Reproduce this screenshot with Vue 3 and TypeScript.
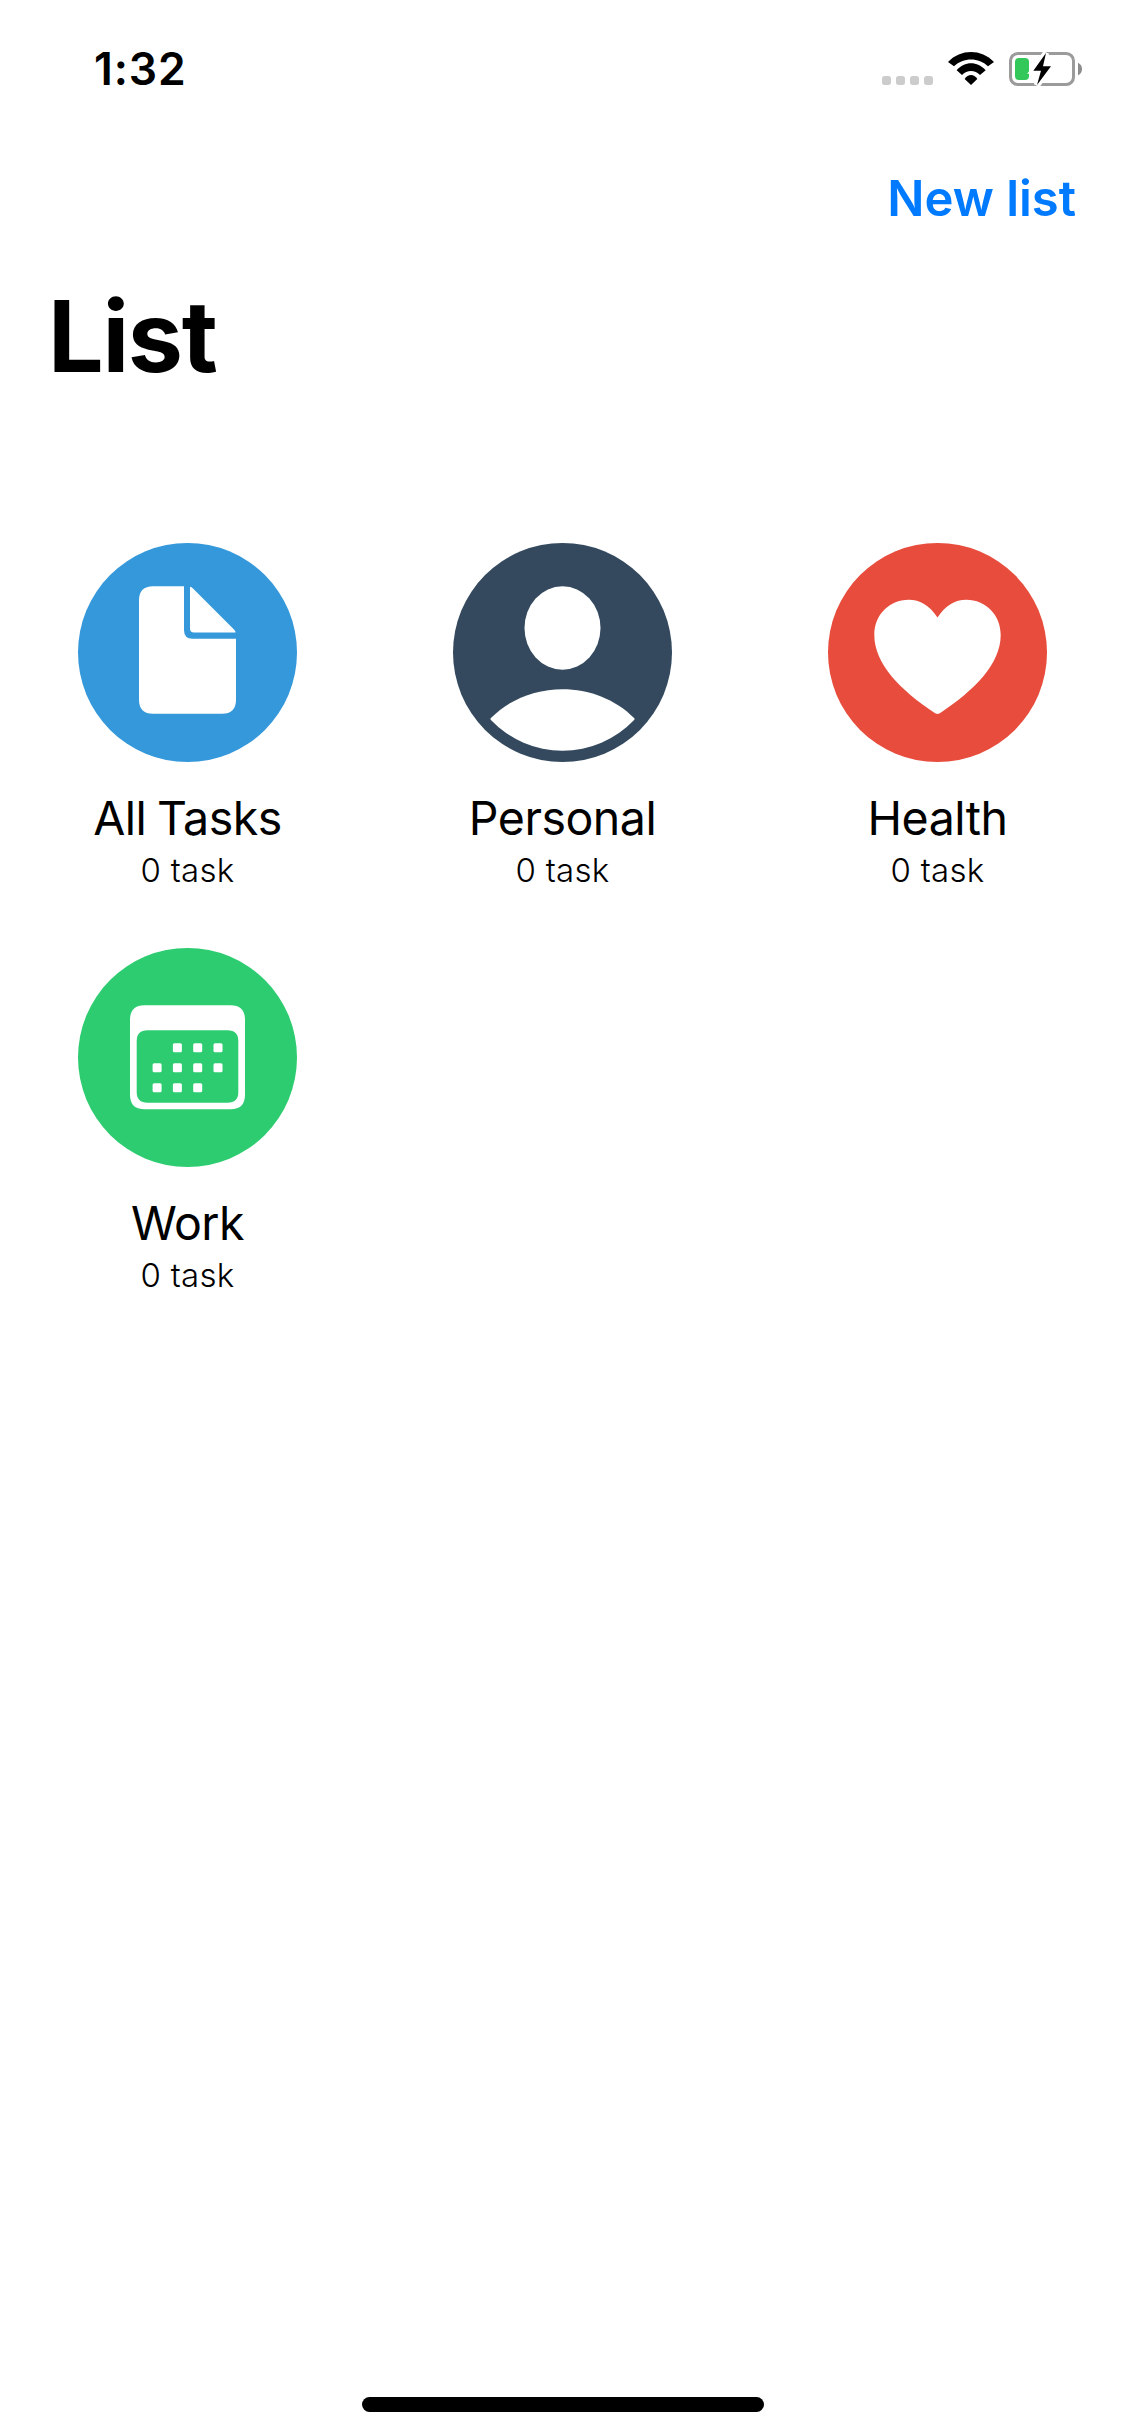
<script setup lang="ts">
type IconName = 'document' | 'person' | 'heart' | 'calendar'

interface TaskList {
  name: string
  kind: string
  icon: IconName
  count: number
}

const lists: TaskList[] = [
  { name: 'All Tasks', kind: 'all', icon: 'document', count: 0 },
  { name: 'Personal', kind: 'personal', icon: 'person', count: 0 },
  { name: 'Health', kind: 'health', icon: 'heart', count: 0 },
  { name: 'Work', kind: 'work', icon: 'calendar', count: 0 },
]

// Calendar day squares as [column, row]
const days: [number, number][] = [
  [1, 0], [2, 0], [3, 0],
  [0, 1], [1, 1], [2, 1], [3, 1],
  [0, 2], [1, 2], [2, 2],
]
</script>

<template>
  <div class="screen">
    <header class="status">
      <span class="time">1:32</span>
      <svg class="indicators" viewBox="66 60 606 114">
        <rect v-for="n in 4" :key="n" :x="24 + n * 42" y="138" width="27" height="27" rx="8" fill="#ccc" />
        <path d="M264 96C302 56 364 56 402 96L384 109C356 82 310 82 282 109Z" />
        <path d="M290 121C314 93 352 93 377 121L360 135C345 119 321 119 306 135Z" />
        <path d="M314 147C324 131 342 131 352 147L333 165Z" />
        <rect x="451.500" y="70.500" width="189" height="93" rx="22" fill="none" stroke="#9b9b9b" stroke-width="9" />
        <path d="M654 98Q666 104 666 117Q666 130 654 136Z" fill="#8c8c8c" />
        <rect x="465" y="84" width="42" height="66" rx="12" fill="#34c759" />
        <path d="M558 69L520 122H543L531 165L573 109H549Z" stroke="#fff" stroke-width="19" fill="#fff" />
        <path d="M558 69L520 122H543L531 165L573 109H549Z" />
      </svg>
    </header>

    <nav class="nav"><button class="new-list" type="button">New list</button></nav>
    <h1 class="title">List</h1>

    <main class="grid">
      <section v-for="list in lists" :key="list.name" class="item">
        <div class="disc" :class="list.kind">
          <svg viewBox="0 0 219 219" fill="#fff">
            <template v-if="list.icon === 'document'">
              <path d="M75 43.300H106V87Q106 95.700 114.500 95.700H158V156.700Q158 170.700 144 170.700H75Q61 170.700 61 156.700V57.300Q61 43.300 75 43.300Z" />
              <path d="M112 43.700Q113.500 44 115 45.500L156 86.500Q157.500 88 157.600 89.600H116Q112 89.600 112 85.500Z" />
            </template>
            <template v-else-if="list.icon === 'person'">
              <ellipse cx="109.500" cy="85" rx="38" ry="41.700" />
              <path d="M37.900 175C76 136.500 143 136.500 181.100 175Q182 176 181.100 177A98.800 98.800 0 0 1 37.900 177Q37 176 37.900 175Z" />
            </template>
            <path
              v-else-if="list.icon === 'heart'"
              d="M109.500 74.500C102 62.700 92 56.700 80.700 56.700C61 56.700 46.300 72 46.300 92C46.300 121 73 147.500 106 169.500Q109.500 172.300 113 169.500C146 147.500 172.700 121 172.700 92C172.700 72 158 56.700 138.300 56.700C127 56.700 117 62.700 109.500 74.500Z"
            />
            <template v-else>
              <path
                fill-rule="evenodd"
                d="M66.500 57.300H152.500Q167 57.300 167 71.800V146.800Q167 161.300 152.500 161.300H66.500Q52 161.300 52 146.800V71.800Q52 57.300 66.500 57.300ZM69.500 82.300Q58.700 82.300 58.700 93V144Q58.700 154.700 69.500 154.700H149.500Q160.300 154.700 160.300 144V93Q160.300 82.300 149.500 82.300Z"
              />
              <rect
                v-for="[c, r] in days"
                :key="`${c}-${r}`"
                :x="74.600 + c * 20.300"
                :y="95.200 + r * 20"
                width="9"
                height="9"
                rx="1.500"
              />
            </template>
          </svg>
        </div>
        <h2 class="name">{{ list.name }}</h2>
        <p class="count">{{ list.count }} task</p>
      </section>
    </main>

    <footer class="home"><div class="home-bar"></div></footer>
  </div>
</template>

<style>
body {
  margin: 0;
  background: #fff;
}
</style>

<style scoped>
.screen {
  box-sizing: border-box;
  width: 1125px;
  height: 2436px;
  display: flex;
  flex-direction: column;
  background: #fff;
  color: #000;
  font-family: Inter, "Liberation Sans", sans-serif;
}
.status {
  height: 132px;
  flex: none;
  box-sizing: border-box;
  padding: 42px 41px 0 94px;
  display: flex;
  justify-content: space-between;
  align-items: flex-start;
}
.time {
  font-size: 44.500px;
  line-height: 54px;
  font-weight: 600;
  letter-spacing: 0.900px;
}
.indicators {
  width: 202px;
  height: 38px;
  margin-top: 8px;
}
.nav {
  height: 132px;
  flex: none;
  display: flex;
  justify-content: flex-end;
  align-items: center;
  box-sizing: border-box;
  padding: 2px 49px 0 0;
}
.new-list {
  border: 0;
  padding: 0;
  background: none;
  color: #007aff;
  font: inherit;
  font-size: 49px;
  line-height: 60px;
  font-weight: 600;
}
.title {
  margin: 0;
  height: 144px;
  flex: none;
  padding-left: 48px;
  font-size: 98.600px;
  line-height: 144px;
  font-weight: 700;
  letter-spacing: -1.300px;
}
.grid {
  flex: 1;
  display: grid;
  grid-template-columns: repeat(3, 375px);
  grid-auto-rows: 405px;
  padding-top: 135px;
}
.item {
  display: flex;
  flex-direction: column;
  align-items: center;
}
.disc {
  width: 219px;
  height: 219px;
  border-radius: 50%;
}
.disc svg {
  display: block;
}
.all { background: #3498db; }
.personal { background: #34495e; }
.health { background: #e74c3c; }
.work { background: #2ecc71; }
.name {
  margin: 28px 0 0;
  font-size: 46.500px;
  line-height: 57px;
  font-weight: 400;
  letter-spacing: -0.500px;
  word-spacing: -2px;
}
.count {
  margin: 1px 0 0;
  font-size: 33px;
  line-height: 44px;
  font-weight: 300;
  letter-spacing: 0.300px;
}
.home {
  flex: none;
  display: flex;
  justify-content: center;
  padding-bottom: 24px;
}
.home-bar {
  width: 402px;
  height: 15px;
  border-radius: 8px;
  background: #000;
}
</style>
